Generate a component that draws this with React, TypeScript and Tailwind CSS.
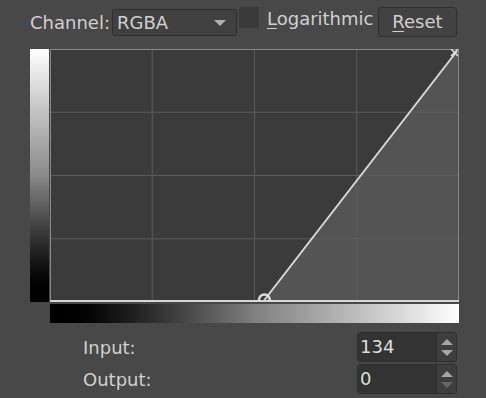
import React from 'react';

const font = { fontFamily: '"DejaVu Sans", "Noto Sans", sans-serif' };

function CurveGraph({ input }: { input: number }) {
  const w = 409;
  const h = 253;
  const x0 = (input / 255) * (w - 1);
  const grid = [1, 2, 3];
  return (
    <svg width={w} height={h} viewBox={`0 0 ${w} ${h}`} className="block">
      <rect x="0" y="0" width={w} height={h} fill="#3b3b3b" />
      {/* area under the curve */}
      <polygon points={`${x0},${h - 1} ${w - 1},1 ${w - 1},${h - 1}`} fill="#545454" />
      {grid.map((i) => (
        <line
          key={'v' + i}
          x1={(w / 4) * i}
          y1="0"
          x2={(w / 4) * i}
          y2={h}
          stroke="#5c5c5c"
          strokeWidth="1"
        />
      ))}
      {grid.map((i) => (
        <line
          key={'h' + i}
          x1="0"
          y1={(h / 4) * i}
          x2={w}
          y2={(h / 4) * i}
          stroke="#5c5c5c"
          strokeWidth="1"
        />
      ))}
      {/* frame */}
      <line x1="0.5" y1="0" x2="0.5" y2={h} stroke="#8a8a8a" />
      <line x1="0" y1="0.5" x2={w} y2="0.5" stroke="#8a8a8a" />
      <line x1={w - 0.5} y1="0" x2={w - 0.5} y2={h} stroke="#8a8a8a" />
      <line x1="0" y1={h - 1} x2={w} y2={h - 1} stroke="#d6d6d6" strokeWidth="2" />
      {/* curve */}
      <line x1={x0} y1={h - 2} x2={w - 2} y2="2" stroke="#d8d8d8" strokeWidth="2" />
      <circle cx={x0} cy={h - 2} r="5.5" fill="none" stroke="#dcdcdc" strokeWidth="2.5" />
      <line x1={w - 8} y1="0" x2={w - 1} y2="7" stroke="#dcdcdc" strokeWidth="1.5" />
      <line x1={w - 8} y1="7" x2={w - 1} y2="0" stroke="#dcdcdc" strokeWidth="1.5" />
    </svg>
  );
}

function SpinBox({ value, downDisabled }: { value: string; downDisabled?: boolean }) {
  return (
    <div className="flex w-[100px] h-[30px] rounded-[3px] border border-[#2e2e2e] overflow-hidden">
      <div className="flex-1 bg-[#333333] pl-[2px] leading-[28px] text-[#dedede]">{value}</div>
      <div className="w-[20px] bg-[#3e3e3e] border-l border-[#2e2e2e] flex flex-col items-center justify-center gap-[5px]">
        <svg width="12" height="6" viewBox="0 0 12 6">
          <polygon points="0,6 6,0 12,6" fill="#a6a6a6" />
        </svg>
        <svg width="12" height="6" viewBox="0 0 12 6">
          <polygon points="0,0 12,0 6,6" fill={downDisabled ? '#666666' : '#a6a6a6'} />
        </svg>
      </div>
    </div>
  );
}

export default function App() {
  return (
    <div
      className="w-[486px] h-[398px] bg-[#484848] text-[18px] text-[#d0d0d0] overflow-hidden"
      style={font}
    >
      {/* top toolbar */}
      <div className="flex items-start h-[49px]">
        <span className="ml-[30px] mt-[9px] leading-[27px]">Channel:</span>
        <div className="ml-[2px] mt-[9px] w-[125px] h-[27px] rounded-[3px] border border-[#2e2e2e] bg-[#404040] flex items-center justify-between pl-[4px] pr-[10px]">
          <span className="leading-[25px]">RGBA</span>
          <svg width="12" height="6" viewBox="0 0 12 6">
            <polygon points="0,0 12,0 6,6" fill="#b0b0b0" />
          </svg>
        </div>
        <div className="ml-[2px] mt-[7px] w-[20px] h-[21px] rounded-[2px] bg-[#3a3a3a]" />
        <span className="ml-[8px] mt-[5px] leading-[27px]">
          <span className="underline underline-offset-[3px]">L</span>ogarithmic
        </span>
        <button className="ml-auto mr-[29px] mt-[7px] w-[79px] h-[30px] rounded-[3px] border border-[#2e2e2e] bg-[#424242] leading-[28px] text-center">
          <span className="underline underline-offset-[3px]">R</span>eset
        </button>
      </div>

      {/* curve area */}
      <div className="flex">
        <div className="ml-[30px] w-[19px] h-[253px] bg-gradient-to-b from-white via-[#8a8a8a] to-black" />
        <div className="ml-[1px]">
          <CurveGraph input={134} />
        </div>
      </div>
      <div className="ml-[50px] mt-[2px] w-[409px] h-[19px] bg-gradient-to-r from-black via-[#808080] to-white" />

      {/* input / output */}
      <div className="flex items-center h-[30px] mt-[9px]">
        <span className="ml-[83px]">Input:</span>
        <div className="ml-auto mr-[29px]">
          <SpinBox value="134" />
        </div>
      </div>
      <div className="flex items-center h-[30px] mt-[2px]">
        <span className="ml-[83px]">Output:</span>
        <div className="ml-auto mr-[29px]">
          <SpinBox value="0" downDisabled />
        </div>
      </div>
    </div>
  );
}
